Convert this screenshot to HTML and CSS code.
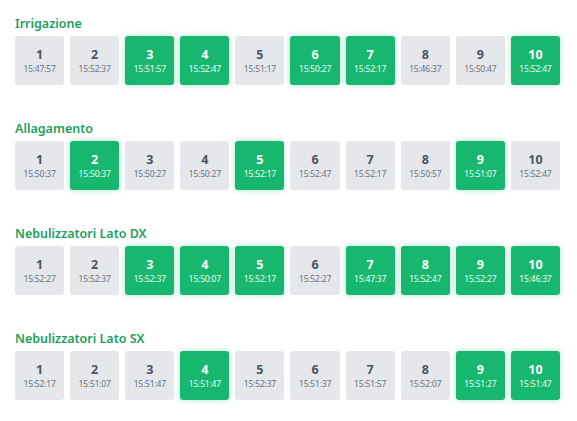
FILE: index.html
```html
<!DOCTYPE html>
<html lang="it">
  <head>
    <meta charset="utf-8">
    <meta name="viewport" content="width=device-width">
    <title>Stato zone</title>
    <link rel="stylesheet" href="styles.css">
  </head>
  <body>
    <div class="zones">

      <section class="zone">
        <h2 class="zone-title">Irrigazione</h2>
        <div class="valves">
          <div class="valve"><span class="num">1</span><span class="time">15:47:57</span></div>
          <div class="valve"><span class="num">2</span><span class="time">15:52:37</span></div>
          <div class="valve on"><span class="num">3</span><span class="time">15:51:57</span></div>
          <div class="valve on"><span class="num">4</span><span class="time">15:52:47</span></div>
          <div class="valve"><span class="num">5</span><span class="time">15:51:17</span></div>
          <div class="valve on"><span class="num">6</span><span class="time">15:50:27</span></div>
          <div class="valve on"><span class="num">7</span><span class="time">15:52:17</span></div>
          <div class="valve"><span class="num">8</span><span class="time">15:46:37</span></div>
          <div class="valve"><span class="num">9</span><span class="time">15:50:47</span></div>
          <div class="valve on"><span class="num">10</span><span class="time">15:52:47</span></div>
        </div>
      </section>

      <section class="zone">
        <h2 class="zone-title">Allagamento</h2>
        <div class="valves">
          <div class="valve"><span class="num">1</span><span class="time">15:50:37</span></div>
          <div class="valve on"><span class="num">2</span><span class="time">15:50:37</span></div>
          <div class="valve"><span class="num">3</span><span class="time">15:50:27</span></div>
          <div class="valve"><span class="num">4</span><span class="time">15:50:27</span></div>
          <div class="valve on"><span class="num">5</span><span class="time">15:52:17</span></div>
          <div class="valve"><span class="num">6</span><span class="time">15:52:47</span></div>
          <div class="valve"><span class="num">7</span><span class="time">15:52:17</span></div>
          <div class="valve"><span class="num">8</span><span class="time">15:50:57</span></div>
          <div class="valve on"><span class="num">9</span><span class="time">15:51:07</span></div>
          <div class="valve"><span class="num">10</span><span class="time">15:52:47</span></div>
        </div>
      </section>

      <section class="zone">
        <h2 class="zone-title">Nebulizzatori Lato DX</h2>
        <div class="valves">
          <div class="valve"><span class="num">1</span><span class="time">15:52:27</span></div>
          <div class="valve"><span class="num">2</span><span class="time">15:52:37</span></div>
          <div class="valve on"><span class="num">3</span><span class="time">15:52:37</span></div>
          <div class="valve on"><span class="num">4</span><span class="time">15:50:07</span></div>
          <div class="valve on"><span class="num">5</span><span class="time">15:52:17</span></div>
          <div class="valve"><span class="num">6</span><span class="time">15:52:27</span></div>
          <div class="valve on"><span class="num">7</span><span class="time">15:47:37</span></div>
          <div class="valve on"><span class="num">8</span><span class="time">15:52:47</span></div>
          <div class="valve on"><span class="num">9</span><span class="time">15:52:27</span></div>
          <div class="valve on"><span class="num">10</span><span class="time">15:46:37</span></div>
        </div>
      </section>

      <section class="zone">
        <h2 class="zone-title">Nebulizzatori Lato SX</h2>
        <div class="valves">
          <div class="valve"><span class="num">1</span><span class="time">15:52:17</span></div>
          <div class="valve"><span class="num">2</span><span class="time">15:51:07</span></div>
          <div class="valve"><span class="num">3</span><span class="time">15:51:47</span></div>
          <div class="valve on"><span class="num">4</span><span class="time">15:51:47</span></div>
          <div class="valve"><span class="num">5</span><span class="time">15:52:37</span></div>
          <div class="valve"><span class="num">6</span><span class="time">15:51:37</span></div>
          <div class="valve"><span class="num">7</span><span class="time">15:51:57</span></div>
          <div class="valve"><span class="num">8</span><span class="time">15:52:07</span></div>
          <div class="valve on"><span class="num">9</span><span class="time">15:51:27</span></div>
          <div class="valve on"><span class="num">10</span><span class="time">15:51:47</span></div>
        </div>
      </section>

    </div>
  </body>
</html>
```
FILE: styles.css
```css
body {
  margin: 0;
  background: #fff;
  font-family: "Noto Sans", "Open Sans", sans-serif;
}

.zones {
  padding: 15px 17px 0 15px;
}

.zone {
  margin-bottom: 35px;
}

.zone-title {
  margin: 0 0 3px;
  font-size: 12.5px;
  line-height: 18px;
  font-weight: 600;
  color: #1c9f5d;
}

.valves {
  display: grid;
  grid-template-columns: repeat(10, 1fr);
  gap: 6px;
}

.valve {
  height: 49px;
  display: flex;
  flex-direction: column;
  align-items: center;
  justify-content: center;
  gap: 1px;
  border-radius: 3px;
  background: #e5e7eb;
  color: #4b5563;
}

.valve.on {
  background: #17b76f;
  color: #fff;
  box-shadow: 0 0 6px rgba(23, 183, 111, .35);
}

.num {
  font-size: 12.5px;
  line-height: 15px;
  font-weight: 700;
}

.time {
  font-size: 8.5px;
  line-height: 12px;
  letter-spacing: -.2px;
  color: #6b7280;
}

.valve.on .time {
  color: #e8fff3;
}
```
